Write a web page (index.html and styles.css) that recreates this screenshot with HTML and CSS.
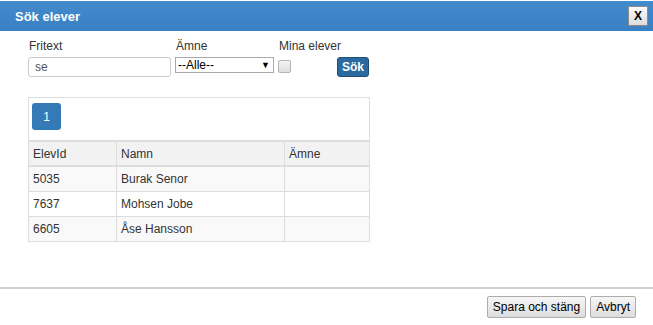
FILE: index.html
```html
<!DOCTYPE html>
<html lang="sv">
<head>
<meta charset="utf-8">
<title>Sök elever</title>
<link rel="stylesheet" href="styles.css">
</head>
<body>
<div class="dialog">
  <div class="titlebar">
    <span class="title">Sök elever</span>
    <button class="close">X</button>
  </div>
  <div class="content">
    <div class="filters">
      <label class="lbl">Fritext</label>
      <label class="lbl">Ämne</label>
      <label class="lbl">Mina elever</label>
      <span></span>
      <input class="text" type="text" value="se">
      <div class="select"><span>--Alle--</span><span class="arrow">▼</span></div>
      <span class="check"></span>
      <button class="search">Sök</button>
    </div>
    <div class="panel">
      <div class="pager"><span class="page">1</span></div>
      <table class="grid">
        <thead>
          <tr><th class="c1">ElevId</th><th class="c2">Namn</th><th class="c3">Ämne</th></tr>
        </thead>
        <tbody>
          <tr class="odd"><td>5035</td><td>Burak Senor</td><td></td></tr>
          <tr><td>7637</td><td>Mohsen Jobe</td><td></td></tr>
          <tr class="odd"><td>6605</td><td>Åse Hansson</td><td></td></tr>
        </tbody>
      </table>
    </div>
  </div>
  <div class="footer">
    <button class="btn">Spara och stäng</button>
    <button class="btn">Avbryt</button>
  </div>
</div>
</body>
</html>
```

FILE: styles.css
```css
html, body {
  margin: 0;
  padding: 0;
  background: #fff;
  font-family: "Liberation Sans", Arial, sans-serif;
  font-size: 12px;
  color: #333;
}
.dialog {
  width: 653px;
  height: 325px;
  padding-top: 1px;
  box-sizing: border-box;
  overflow: hidden;
}
.titlebar {
  height: 30px;
  background: linear-gradient(#428bcb, #3a80c4);
  display: flex;
  align-items: center;
  justify-content: space-between;
  padding: 0 5px 0 15px;
}
.title {
  color: #fff;
  font-weight: bold;
  font-size: 13px;
}
.close {
  width: 20px;
  height: 20px;
  padding: 0;
  border: 1px solid #8a8a8a;
  background: linear-gradient(#fbfbfb, #dcdcdc);
  font-family: "Liberation Sans", Arial, sans-serif;
  font-weight: bold;
  font-size: 12px;
  color: #000;
  line-height: 18px;
}
.content {
  padding: 8px 0 0 28px;
  height: 256px;
  box-sizing: border-box;
}
.filters {
  display: grid;
  grid-template-columns: 147px 103px 59px auto;
  grid-template-rows: 18px 20px;
  row-gap: 0;
  align-items: start;
}
.lbl {
  font-size: 12px;
  line-height: 14px;
  padding-left: 1px;
  color: #333;
  white-space: nowrap;
}
.text {
  width: 143px;
  height: 20px;
  box-sizing: border-box;
  border: 1px solid #ccc;
  border-radius: 3px;
  padding: 0 6px;
  font-family: "Liberation Sans", Arial, sans-serif;
  font-size: 12px;
  color: #555;
  margin: 0;
}
.select {
  width: 99px;
  height: 16px;
  box-sizing: border-box;
  border: 1px solid #a9a9a9;
  display: flex;
  align-items: center;
  justify-content: space-between;
  padding: 0 3px 0 2px;
  font-size: 12px;
  color: #000;
}
.arrow {
  font-size: 9px;
}
.check {
  width: 11px;
  height: 11px;
  margin-top: 3px;
  border: 1px solid #b5b5b5;
  border-radius: 2px;
  background: linear-gradient(#f4f4f4, #dedede);
}
.search {
  width: 32px;
  height: 20px;
  padding: 0;
  border: 1px solid #204d74;
  border-radius: 3px;
  background: #2b6aa0;
  color: #fff;
  font-weight: bold;
  font-family: "Liberation Sans", Arial, sans-serif;
  font-size: 12px;
}
.panel {
  margin-top: 20px;
  width: 342px;
  border: 1px solid #ddd;
  box-sizing: border-box;
}
.pager {
  padding: 5px 0 10px 3px;
}
.page {
  display: flex;
  align-items: center;
  justify-content: center;
  width: 29px;
  height: 27px;
  background: #337ab7;
  border-radius: 3px;
  color: #fff;
  font-size: 12px;
}
.grid {
  width: 100%;
  border-collapse: collapse;
}
.grid th, .grid td {
  text-align: left;
  font-weight: normal;
  padding: 0 4px;
  height: 24px;
  border-left: 1px solid #ddd;
  border-top: 1px solid #ddd;
  color: #333;
}
.grid th:first-child, .grid td:first-child {
  border-left: none;
}
.grid th {
  background: #f2f2f2;
  border-top: 2px solid #ddd;
  border-bottom: 2px solid #ddd;
  height: 23px;
}
.c1 { width: 79px; }
.c2 { width: 159px; }
.grid tr.odd td {
  background: #f9f9f9;
}
.footer {
  border-top: 2px solid #d0d0d0;
  display: flex;
  justify-content: flex-end;
  gap: 4px;
  padding: 7px 17px 0 0;
}
.btn {
  height: 22px;
  padding: 0 5px;
  border: 1px solid #adadad;
  border-radius: 2px;
  background: linear-gradient(#f6f6f6, #dddddd);
  font-family: "Liberation Sans", Arial, sans-serif;
  font-size: 12px;
  color: #000;
}
```
